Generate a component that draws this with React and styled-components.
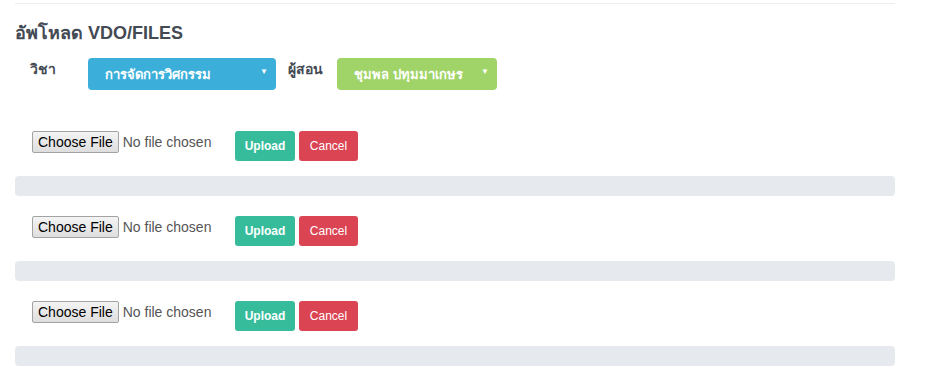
import React from 'react'
import styled, {createGlobalStyle} from 'styled-components'

const GlobalStyle = createGlobalStyle`
    body {
        margin: 0;
        background: #fff;
        font-family: "Liberation Sans", Arial, sans-serif;
        color: #434a54;
    }
`

const Page = styled.div`
    width: 880px;
    padding: 3px 15px 0;
`

const Divider = styled.hr`
    margin: 0;
    border: 0;
    border-top: 1px solid #eeeeee;
`

const Title = styled.h3`
    margin: 18px 0 0;
    font-size: 18px;
    line-height: 22px;
    font-weight: bold;
    color: #434a54;
`

const FilterRow = styled.div`
    display: flex;
    align-items: flex-start;
    margin-top: 14px;
    padding-left: 15px;
`

const Label = styled.label`
    width: ${p => p.width}px;
    padding-top: 2px;
    font-size: 14px;
    line-height: 18px;
    font-weight: bold;
    color: #434a54;
`

const SelectWrap = styled.div`
    position: relative;
    width: ${p => p.width}px;
    margin-right: ${p => p.gap || 0}px;
`

const Select = styled.select`
    appearance: none;
    width: 100%;
    height: 32px;
    padding: 0 20px 0 ${p => p.indent}px;
    border: 0;
    border-radius: 4px;
    background: ${p => p.color};
    color: #fff;
    font-family: "Liberation Sans", Arial, sans-serif;
    font-size: 13px;
    font-weight: bold;
    outline: none;
`

const Arrow = styled.span`
    position: absolute;
    right: 8px;
    top: 9px;
    font-size: 8px;
    color: #fff;
    pointer-events: none;
`

const UploadBlock = styled.div`
    margin-top: ${p => p.first ? 41 : 20}px;
`

const FileRow = styled.div`
    display: flex;
    align-items: flex-start;
    padding-left: 15px;
`

const FileInput = styled.input`
    width: 200px;
    margin: 0;
    font-family: "Liberation Sans", Arial, sans-serif;
    font-size: 14px;
    color: #555;

    &::file-selector-button {
        height: 22px;
        margin: 0 4px 0 2px;
        padding: 0 5px;
        border: 1px solid #a3a3a3;
        border-radius: 2px;
        background: linear-gradient(#f4f4f4, #dedede);
        color: #000;
        font-family: "Liberation Sans", Arial, sans-serif;
        font-size: 14px;
    }
`

const ActionButton = styled.button`
    width: ${p => p.width}px;
    height: 30px;
    margin-left: ${p => p.gap}px;
    padding: 0;
    border: 0;
    border-radius: 3px;
    background: ${p => p.color};
    color: #fff;
    font-family: "Liberation Sans", Arial, sans-serif;
    font-size: 12px;
    font-weight: ${p => (p.bold ? 'bold' : 'normal')};
`

const Progress = styled.div`
    height: 20px;
    margin-top: 15px;
    border-radius: 4px;
    background: #e6e9ed;
`

export default function App() {
    return (
        <Page>
            <GlobalStyle/>
            <Divider/>
            <Title>อัพโหลด VDO/FILES</Title>

            {/* subject & teacher */}
            <FilterRow>
                <Label width={58}>วิชา</Label>
                <SelectWrap width={188} gap={12}>
                    <Select color="#3bafda" indent={17} defaultValue="a">
                        <option value="a">การจัดการวิศกรรม</option>
                    </Select>
                    <Arrow>▼</Arrow>
                </SelectWrap>
                <Label width={49}>ผู้สอน</Label>
                <SelectWrap width={160}>
                    <Select color="#a0d468" indent={17} defaultValue="a">
                        <option value="a">ชุมพล ปทุมมาเกษร</option>
                    </Select>
                    <Arrow>▼</Arrow>
                </SelectWrap>
            </FilterRow>

            {[0, 1, 2].map(i => (
                <UploadBlock key={i} first={i === 0}>
                    <FileRow>
                        <FileInput type="file"/>
                        <ActionButton width={60} gap={5} color="#37bc9b" bold>Upload</ActionButton>
                        <ActionButton width={59} gap={4} color="#da4453">Cancel</ActionButton>
                    </FileRow>
                    <Progress/>
                </UploadBlock>
            ))}
        </Page>
    )
}
